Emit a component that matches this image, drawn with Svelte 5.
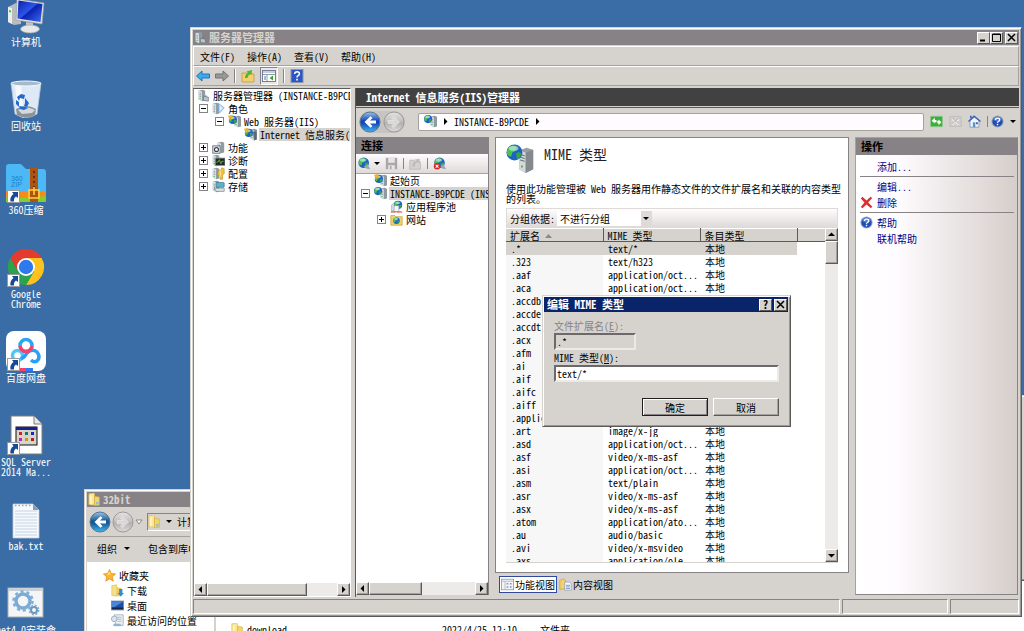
<script>
  const shortcuts = [
    { icon: 'computer', label: '计算机' },
    { icon: 'recycle', label: '回收站' },
    { icon: 'zip', label: '360压缩', link: true },
    { icon: 'chrome', label: 'Google\nChrome', link: true },
    { icon: 'netdisk', label: '百度网盘', link: true },
    { icon: 'sql', label: 'SQL Server\n2014 Ma...', link: true },
    { icon: 'text', label: 'bak.txt' },
    { icon: 'gears', label: 'net4.0安装命' }
  ];

  const menus = [
    ['文件', 'F'],
    ['操作', 'A'],
    ['查看', 'V'],
    ['帮助', 'H']
  ];

  const serverTree = [
    { level: 0, icon: 'server', label: '服务器管理器 (INSTANCE-B9PCDE)' },
    { level: 1, icon: 'roles', label: '角色', toggle: '-' },
    { level: 2, icon: 'web', label: 'Web 服务器(IIS)', toggle: '-' },
    { level: 3, icon: 'iis', label: 'Internet 信息服务(IIS)管理器', selected: true },
    { level: 1, icon: 'features', label: '功能', toggle: '+' },
    { level: 1, icon: 'diagnose', label: '诊断', toggle: '+' },
    { level: 1, icon: 'config', label: '配置', toggle: '+' },
    { level: 1, icon: 'storage', label: '存储', toggle: '+' }
  ];

  const connectionTree = [
    { level: 1, icon: 'web', label: '起始页' },
    { level: 1, icon: 'site', label: 'INSTANCE-B9PCDE (INSTANCE-B9PCDE\\Administrator)', toggle: '-', selected: true },
    { level: 2, icon: 'pool', label: '应用程序池' },
    { level: 2, icon: 'sites', label: '网站', toggle: '+' }
  ];

  const mimeTypes = [
    ['.*', 'text/*'],
    ['.323', 'text/h323'],
    ['.aaf', 'application/oct...'],
    ['.aca', 'application/oct...'],
    ['.accdb', 'application/msa...'],
    ['.accde', 'application/msa...'],
    ['.accdt', 'application/msa...'],
    ['.acx', 'application/int...'],
    ['.afm', 'application/oct...'],
    ['.ai', 'application/pos...'],
    ['.aif', 'audio/x-aiff'],
    ['.aifc', 'audio/aiff'],
    ['.aiff', 'audio/aiff'],
    ['.application', 'application/x-m...'],
    ['.art', 'image/x-jg'],
    ['.asd', 'application/oct...'],
    ['.asf', 'video/x-ms-asf'],
    ['.asi', 'application/oct...'],
    ['.asm', 'text/plain'],
    ['.asr', 'video/x-ms-asf'],
    ['.asx', 'video/x-ms-asf'],
    ['.atom', 'application/ato...'],
    ['.au', 'audio/basic'],
    ['.avi', 'video/x-msvideo'],
    ['.axs', 'application/ole...']
  ];

  let selectedRow = $state(0);
  let view = $state('features');
  let mimeType = $state('text/*');
  let dialogOpen = $state(true);
</script>

{#snippet tower(x)}
  <path d="M{x} 2l5-1 3 1v12l-4 1-4-2z" fill="#8f9ba3" />
  <path d="M{x} 2l4 1v12l-4-2z" fill="#dfe6ea" />
  <path d="M{x + 1} 5l2 .5M{x + 1} 7l2 .5M{x + 1} 9l2 .5" stroke="#6c7880" stroke-width=".8" />
  <rect x={x + 1} y="11" width="1.5" height="1.5" fill="#3fbf4a" />
{/snippet}

{#snippet globe(cx, cy, r)}
  <circle {cx} {cy} {r} fill="#1d63c4" />
  <path d="M{cx - r * 0.8} {cy - r * 0.5}q{r * 0.6} {-r * 0.7} {r * 1.1} {-r * 0.2}q{-r * 0.1} {r * 0.7} {-r * 0.6} {r * 0.7}q0 {r * 0.6} {-r * 0.3} {r * 0.5}q{-r * 0.6} {-r * 0.2} {-r * 0.2} {-r}z" fill="#4fc04a" />
  <path d="M{cx + r * 0.2} {cy + r * 0.1}q{r * 0.5} {-r * 0.3} {r * 0.7} {r * 0.1}q{-r * 0.3} {r * 0.7} {-r * 0.6} {r * 0.6}z" fill="#37a63c" />
  <ellipse cx={cx - r * 0.1} cy={cy - r * 0.5} rx={r * 0.6} ry={r * 0.3} fill="#d4f3ff" opacity=".6" />
{/snippet}

{#snippet helpIcon()}
  <svg class="icon" viewBox="0 0 16 16" aria-hidden="true">
    <circle cx="8" cy="8" r="7.5" fill="#9aa5b8" />
    <circle cx="8" cy="8" r="6.3" fill="#1f4db4" />
    <ellipse cx="8" cy="5" rx="5" ry="3" fill="#6f9cf0" opacity=".6" />
    <path d="M5.500 6.200q0-2.400 2.600-2.400t2.500 2.200q0 1.300-1.400 2t-1.200 1.800" fill="none" stroke="#fff" stroke-width="1.7" />
    <rect x="7.1" y="10.8" width="1.8" height="1.8" fill="#fff" />
  </svg>
{/snippet}

{#snippet folderIcon()}
  <svg class="icon" viewBox="0 0 16 16" aria-hidden="true">
    <path d="M1 1l6-1 1 1v14l-7-1z" fill="#f9e795" stroke="#d9b64a" stroke-width=".7" />
    <path d="M8 4l6 1v10l-6 .5z" fill="#f3d468" stroke="#d2aa3c" stroke-width=".7" />
    <path d="M3.500 3v11" stroke="#fff9da" stroke-width="1.5" />
    <rect x="10" y="11" width="3" height="3" fill="#7fc0e8" />
  </svg>
{/snippet}

{#snippet navCircle(id, forward, active, color)}
  <svg class="nav-circle" viewBox="0 0 22 22" aria-hidden="true">
    <defs>
      <linearGradient {id} x1="0" y1="0" x2="0" y2="1">
        <stop offset="0" stop-color={active ? '#9cc4e8' : '#e6e4e2'} />
        <stop offset=".45" stop-color={active ? color : '#c2c0c0'} />
        <stop offset=".55" stop-color={active ? color : '#b2b0b0'} />
        <stop offset="1" stop-color={active ? '#3fb6f2' : '#dedcda'} />
      </linearGradient>
    </defs>
    <circle cx="11" cy="11" r="10" fill="url(#{id})" stroke={active ? '#5a7390' : '#9c9a9a'} />
    <path
      d={forward ? 'M5 9.5h6L8.5 7l2-1.8L16.5 11l-6 5.800-2-1.800 2.500-2.500H5z' : 'M17 9.5h-6L13.5 7l-2-1.8L5.5 11l6 5.800 2-1.800-2.500-2.500h6z'}
      fill={active ? '#fff' : '#d9d7d7'}
      stroke={active ? 'none' : '#eeecec'}
      stroke-width=".6"
    />
  </svg>
{/snippet}

{#snippet smallIcon(name)}
  <svg class="icon" viewBox="0 0 16 16" aria-hidden="true">
    {#if name === 'server'}
      {@render tower(2)}
      <path d="M8 9l6 1v5l-6-1z" fill="#b9c4cb" stroke="#66747e" stroke-width=".8" />
      <path d="M9.500 9q1.500-2 3 .5" fill="none" stroke="#66747e" />
    {:else if name === 'roles'}
      {@render tower(1)}
      <path d="M8 2l7 5-5 6-2-1z" fill="#b5d7f4" stroke="#6aa2d0" stroke-width=".8" />
      <path d="M10 5l3 2.500-3 3z" fill="#eef7ff" />
    {:else if name === 'web' || name === 'iis'}
      {@render tower(8)}
      {@render globe(6, 6, 5)}
      <path d="M0 1l5-1 1 4-4 2z" fill="#f1b02c" />
      {#if name === 'iis'}
        <path d="M11 5l3-1 1.500 1v9l-3 1.500z" fill="#5f6a72" />
      {/if}
    {:else if name === 'site'}
      {@render tower(8)}
      {@render globe(5, 5, 5)}
    {:else if name === 'features'}
      {@render tower(7)}
      <rect x="1" y="6" width="9" height="9" fill="#e9eef2" stroke="#4f5b64" />
      <circle cx="5.500" cy="10.500" r="2.500" fill="none" stroke="#303a42" stroke-width="1.300" />
    {:else if name === 'diagnose'}
      {@render tower(1)}
      <rect x="4" y="5" width="12" height="9" fill="#1f2a22" stroke="#8a9298" />
      <path d="M5.500 10h2l1.500-3 2 5 1-3h2.500" fill="none" stroke="#65c83a" />
    {:else if name === 'config'}
      {@render tower(1)}
      <path d="M8 4h3l1-3 3 1v6l-2 2v5h-3v-4l-3-1z" fill="#f2c23b" stroke="#b98a1c" stroke-width=".7" />
      <path d="M10 4v8" stroke="#fff3bf" />
    {:else if name === 'storage'}
      {@render tower(1)}
      <rect x="5" y="3" width="10" height="6" rx="1" fill="#5ab2cf" stroke="#3a7186" stroke-width=".8" />
      <path d="M3 10h12v4H5z" fill="#dce2e5" stroke="#717d84" stroke-width=".8" />
    {:else if name === 'pool'}
      <path d="M2 6l5-4v11l-5 1z" fill="#d9e2ea" stroke="#8796a3" stroke-width=".7" />
      {@render globe(10, 6, 5)}
      <rect x="5" y="7" width="6" height="7" fill="#f4f7fa" stroke="#7f8b96" stroke-width=".7" />
      <path d="M1 14h6v1.500H1zM8 14h7v1.500H8z" fill="#d23c30" />
    {:else if name === 'sites'}
      <path d="M1 3h5l1 1.500h8V15H1z" fill="#f2cf67" stroke="#c49a30" stroke-width=".8" />
      {@render globe(8, 9.5, 4)}
    {:else if name === 'star'}
      <path d="M8 .5l2.200 5 5.300.5-4 3.700 1.200 5.300L8 12.200 3.300 15l1.200-5.300-4-3.700 5.300-.5z" fill="#fbb52e" stroke="#df8518" stroke-width=".8" />
      <path d="M8 3l1.300 3.300L5 8z" fill="#ffe58f" />
    {:else if name === 'download'}
      <path d="M1 2l6-1v14l-6-1z" fill="#f7e08a" stroke="#d9b64a" stroke-width=".7" />
      <path d="M7 4l6 1v10H7z" fill="#f0cc5a" />
      <path d="M10 6h4v5h2l-4 4.500L8 11h2z" fill="#2b8de0" />
    {:else if name === 'desktop'}
      <rect x=".5" y="2.500" width="15" height="11" fill="#1d4fa5" stroke="#7b8ca5" />
      <path d="M1 3h14L4 10H1z" fill="#4b86d6" />
      <path d="M1 11.500h14" stroke="#15244a" stroke-width="2" />
    {:else if name === 'recent'}
      <path d="M4 1h11v13H6z" fill="#eef2f6" stroke="#8b98a5" stroke-width=".8" />
      <path d="M7 4h6M7 6.500h6M8 9h5" stroke="#9fb0c0" />
      <circle cx="4" cy="6" r="3.500" fill="#d7e6f2" stroke="#8296a8" stroke-width=".8" />
      <path d="M3 12h9v3H3z" fill="#8fb4d6" />
    {/if}
  </svg>
{/snippet}

{#snippet bigIcon(name)}
  <svg class="big-icon" viewBox="0 0 40 40" aria-hidden="true">
    {#if name === 'computer'}
      <defs>
        <linearGradient id="screen" x1="0" y1="0" x2="1" y2="1">
          <stop offset="0" stop-color="#0a1fae" />
          <stop offset=".45" stop-color="#2d55e6" />
          <stop offset=".5" stop-color="#0b21b4" />
          <stop offset="1" stop-color="#3f6df0" />
        </linearGradient>
      </defs>
      <path d="M2 12l8-4 5 1v20l-7 1-6-3z" fill="#b9bcbe" />
      <path d="M2 12l4 1v16l-4-2z" fill="#eceeee" />
      <path d="M3 15l2 .5v2L3 17z" fill="#2fd13a" />
      <path d="M11 4l27 4-2 21-26-4z" fill="#e3e4e6" stroke="#9b9fa3" stroke-width=".7" />
      <path d="M12.500 5.500l24 3.500-2 18-23-3.500z" fill="url(#screen)" />
      <path d="M20 27l7 1v5h-7z" fill="#c4c6c8" />
      <ellipse cx="24" cy="34" rx="9.500" ry="4" fill="#e6e7e8" stroke="#a4a7a9" stroke-width=".7" />
    {:else if name === 'recycle'}
      <path d="M5 4l4 31q11 7 22 0l4-31z" fill="#dde9f6" stroke="#b3c4d6" stroke-width=".8" />
      <path d="M9 6l3 30q4 3 6 3L15 6z" fill="#fff" opacity=".7" />
      <path d="M10 30q10-6 20 0l-1 6q-9 5-18 0z" fill="#8c9298" />
      <path d="M12 31q8-5 17 0l-3 3-10 1z" fill="#d4d8da" />
      <ellipse cx="20" cy="4.500" rx="15" ry="2.500" fill="#a8b9c9" stroke="#f3f8fc" />
      <path d="M11 18l4-3 4 1-1 4-4-1-1 3zM10 21l3 2v5l-3-3zM19 19l4 5-2 4-3-1 1-3zM13 27l6 1 3 1-4 2-4-1z" fill="#2468d0" />
    {:else if name === 'zip'}
      <path d="M0 4q0-3 3-3h12l5 5h17q3 0 3 3v30H0z" fill="#4cb8f6" />
      <path d="M0 29h40v10H0z" fill="#f68a1c" />
      <path d="M0 34q20 2 40-1v4q0 2-2 2H0z" fill="#83cf2c" />
      <text x="5" y="18" class="zip-text">360</text>
      <text x="5" y="24" class="zip-text">ZIP</text>
      <path d="M24 5h8v34h-8z" fill="#ad5411" />
      <path d="M28 8v2M28 13v2M28 18v2M28 23v3" stroke="#53240a" stroke-width="1.600" />
      <path d="M23 27h10v8H23zM28 24v8" fill="none" stroke="#ffcf3e" stroke-width="1.600" />
    {:else if name === 'chrome'}
      <path d="M20 11h15.600A18 18 0 0 1 20 38l8-13.500z" fill="#fcc31e" />
      <path d="M4.400 11A18 18 0 0 1 35.600 11H20l-7 5-1 8z" fill="#e33b2e" />
      <path d="M12 24.500L20 29l7.800-4.500L20 38A18 18 0 0 1 4.400 11z" fill="#2da24c" />
      <circle cx="20" cy="20" r="9" fill="#fff" />
      <circle cx="20" cy="20" r="7.200" fill="#2f79ee" />
    {:else if name === 'netdisk'}
      <rect width="40" height="40" rx="8" fill="#fff" />
      <circle cx="11.500" cy="24.500" r="5" fill="none" stroke="#4cc6fb" stroke-width="3.500" />
      <path d="M15 28q4-2 6-6 5-5 10-1 4 5 0 9-3 2-6-1" fill="none" stroke="#2b9ff8" stroke-width="3.500" />
      <circle cx="20" cy="14.500" r="6" fill="none" stroke="#2ba6f5" stroke-width="3.500" />
      <path d="M14 15q1 5.500 6 5.500t6-5.500" fill="none" stroke="#f7416a" stroke-width="3.500" />
      <path d="M13 38.500h7" stroke="#f7416a" stroke-width="3" />
      <path d="M20 38.500h7" stroke="#2f7df5" stroke-width="3" />
    {:else if name === 'sql'}
      <path d="M5 1h23l8 8v30H5z" fill="#fff" stroke="#7d7d7d" />
      <path d="M28 1v8h8" fill="#e8e8e8" stroke="#7d7d7d" />
      <rect x="10" y="12" width="21" height="18" fill="#d8d4cc" stroke="#111" />
      <path d="M10 13.500h21" stroke="#14248c" stroke-width="3" />
      <path d="M13 17h3v3h-3z" fill="#c22" />
      <path d="M19 17h3v3h-3z" fill="#177" />
      <path d="M25 17h3v3h-3z" fill="#22c" />
      <path d="M13 23h3v3h-3z" fill="#b2b" />
      <path d="M19 23h3v3h-3z" fill="#c91" />
      <path d="M25 23h3v3h-3z" fill="#a22" />
    {:else if name === 'text'}
      <path d="M7 5h20l6 6v28H7z" fill="#f7fafd" stroke="#c3ccd6" stroke-width=".8" />
      <path d="M27 5v6h6" fill="#8d9aa8" />
      <path d="M9 12h22M9 15h22M9 18h22M9 21h22M9 24h22M9 27h22M9 30h22M9 33h22M9 36h22" stroke="#c4d4e4" />
      <path d="M9 6.500h16" stroke="#9aa6b2" stroke-width="1.500" stroke-dasharray="1.500 2" />
    {:else if name === 'gears'}
      <rect x="2" y="5" width="35" height="29" fill="#f4f5f6" stroke="#a7adb3" />
      <path d="M2.500 7h34" stroke="#c6cfda" stroke-width="2" />
      <circle cx="17" cy="18" r="7" fill="none" stroke="#7cabd4" stroke-width="3.500" />
      <circle cx="17" cy="18" r="9.500" fill="none" stroke="#7eaed6" stroke-width="2.500" stroke-dasharray="3 3" />
      <circle cx="28" cy="27" r="3" fill="none" stroke="#6d97bc" stroke-width="2" />
      <circle cx="28" cy="27" r="4.700" fill="none" stroke="#7eaed6" stroke-width="1.500" stroke-dasharray="2 1.700" />
    {/if}
  </svg>
{/snippet}

{#snippet tree(nodes, label)}
  <ul class="tree" aria-label={label}>
    {#each nodes as node}
      <li class="node level{node.level}">
        <span class="slot">
          {#if node.toggle}
            <button class="toggle" aria-label={node.toggle === '-' ? '折叠' : '展开'}>
              <svg viewBox="0 0 7 7"><path d={node.toggle === '-' ? 'M1 3.5h5' : 'M1 3.5h5M3.5 1v5'} stroke="#000" /></svg>
            </button>
          {/if}
        </span>
        {@render smallIcon(node.icon)}
        <span class="node-label" class:selected={node.selected}>{node.label}</span>
      </li>
    {/each}
  </ul>
{/snippet}

{#snippet hscroll(size)}
  <div class="scrollbar">
    <button class="scroll-button" aria-label="向左滚动"><svg viewBox="0 0 7 7"><path d="M5 0v7L1.500 3.500z" /></svg></button>
    <div class="thumb" style="width: {size}%"></div>
    <span class="track"></span>
    <button class="scroll-button" aria-label="向右滚动"><svg viewBox="0 0 7 7"><path d="M2 0v7l3.500-3.500z" /></svg></button>
  </div>
{/snippet}

<main class="desktop">
  <ul class="shortcuts">
    {#each shortcuts as item}
      <li>
        <span class="picture">
          {@render bigIcon(item.icon)}
          {#if item.link}
            <svg class="link-badge" viewBox="0 0 13 13" aria-hidden="true">
              <rect x=".5" y=".5" width="12" height="12" fill="#fff" stroke="#9a9a9a" />
              <path d="M5 2h6v6L9 6.500Q6.500 8 7 11.500H3.500Q2.500 7 6.500 4z" fill="#164a96" />
            </svg>
          {/if}
        </span>
        <span class="caption">{item.label}</span>
      </li>
    {/each}
  </ul>

  <section class="window explorer" aria-label="32bit">
    <header class="titlebar">{@render folderIcon()}<span>32bit</span></header>
    <div class="explorer-nav">
      <button class="plain" aria-label="后退">{@render navCircle('ex-back', false, true, '#135a94')}</button>
      <button class="plain" aria-label="前进">{@render navCircle('ex-forward', true, false)}</button>
      <svg class="nav-caret" viewBox="0 0 8 6" aria-hidden="true"><path d="M1 1h6L4 5z" fill="#fff" stroke="#888" /></svg>
      <div class="explorer-address">{@render folderIcon()}<i class="caret"></i><span>计算机</span></div>
    </div>
    <div class="explorer-tools">
      <button class="plain">组织 <i class="caret"></i></button>
      <button class="plain">包含到库中 <i class="caret"></i></button>
    </div>
    <div class="explorer-body">
      <ul class="places">
        <li class="favorites">{@render smallIcon('star')}<span>收藏夹</span></li>
        <li>{@render smallIcon('download')}<span>下载</span></li>
        <li>{@render smallIcon('desktop')}<span>桌面</span></li>
        <li>{@render smallIcon('recent')}<span>最近访问的位置</span></li>
      </ul>
      <ul class="files">
        <li>{@render folderIcon()}<span class="file-name">download</span><span class="file-date">2022/4/25 12:10</span><span>文件夹</span></li>
      </ul>
    </div>
  </section>

  <section class="window back-window" aria-hidden="true"></section>

  <section class="window manager" aria-label="服务器管理器">
    <header class="titlebar">
      {@render smallIcon('server')}
      <h1>服务器管理器</h1>
      <div class="window-buttons">
        <button aria-label="最小化"><svg viewBox="0 0 9 9"><path d="M1 7.500h5" stroke="#000" stroke-width="2" /></svg></button>
        <button aria-label="最大化"><svg viewBox="0 0 9 9"><path d="M.5 1h8v7.500h-8zM.5 1.500h8" fill="none" stroke="#000" /></svg></button>
        <button class="close" aria-label="关闭"><svg viewBox="0 0 9 9"><path d="M1 1l7 7M8 1L1 8" stroke="#000" stroke-width="1.500" /></svg></button>
      </div>
    </header>

    <nav class="menubar">
      {#each menus as [name, key]}
        <button class="plain">{name}({key})</button>
      {/each}
    </nav>

    <div class="toolbar">
      <button class="plain" aria-label="后退">
        <svg class="tool-icon" viewBox="0 0 14 14"><path d="M.5 7L6 2v3h7.500v4H6v3z" fill="#39aaf0" stroke="#2077bb" /></svg>
      </button>
      <button class="plain" aria-label="前进">
        <svg class="tool-icon" viewBox="0 0 14 14"><path d="M13.500 7L8 2v3H.5v4H8v3z" fill="#989898" stroke="#727272" /></svg>
      </button>
      <i class="separator"></i>
      <button class="plain" aria-label="上一级">
        <svg class="tool-icon" viewBox="0 0 14 14">
          <path d="M1 4h5l1 1h6v8H1z" fill="#f3cf70" stroke="#c49b3f" stroke-width=".8" />
          <path d="M4 9q0-4 3-5L5.500 2.500 11 1l-.5 5L9 5Q7 6 6.500 9z" fill="#4eb82b" />
        </svg>
      </button>
      <button class="plain pressed" aria-label="显示/隐藏控制台树">
        <svg class="tool-icon" viewBox="0 0 14 14">
          <rect x=".5" y="1.500" width="13" height="11" fill="#fff" stroke="#737f96" />
          <path d="M1 3h12M1 5.500h12M5 6v6" stroke="#8f9bb3" />
          <path d="M2 8h2M2 10h2" stroke="#4d73b5" />
          <path d="M11 6.500v5L7.500 9z" fill="#38a32b" />
        </svg>
      </button>
      <i class="separator"></i>
      <button class="plain" aria-label="帮助">
        <svg class="tool-icon" viewBox="0 0 14 14">
          <rect x="1" y=".5" width="12" height="13" fill="#2c56c4" stroke="#8b96ac" />
          <path d="M4.700 5q0-2.200 2.400-2.200T9.400 5q0 1-1.200 1.700T7 8.500" fill="none" stroke="#fff" stroke-width="1.500" />
          <rect x="6.200" y="9.800" width="1.700" height="1.700" fill="#fff" />
        </svg>
      </button>
    </div>

    <div class="panes">
      <aside class="server-pane">
        {@render tree(serverTree, '服务器管理器')}
        {@render hscroll(64)}
      </aside>

      <section class="iis">
        <h2 class="iis-title">Internet 信息服务(IIS)管理器</h2>
        <div class="iis-nav">
          <div class="round-buttons">
            <button class="plain" aria-label="后退">{@render navCircle('iis-back', false, true, '#1546b8')}</button>
            <button class="plain" aria-label="前进">{@render navCircle('iis-forward', true, false)}</button>
          </div>
          <div class="address">
            {@render smallIcon('site')}
            <svg class="crumb" viewBox="0 0 5 7"><path d="M1 0v7l3.500-3.500z" /></svg>
            <span>INSTANCE-B9PCDE</span>
            <svg class="crumb" viewBox="0 0 5 7"><path d="M1 0v7l3.500-3.500z" /></svg>
          </div>
          <button class="plain" aria-label="刷新">
            <svg class="icon" viewBox="0 0 16 16">
              <rect x=".5" y="1.500" width="15" height="13" rx="1" fill="#36b335" stroke="#9cc79a" />
              <path d="M2 7l4-3.500V6h2v3H6v1.500zM14 9l-3.500 3.500V10H9V7h1.500V5.500z" fill="#fff" />
            </svg>
          </button>
          <button class="plain" aria-label="停止">
            <svg class="icon" viewBox="0 0 16 16">
              <rect x="1" y="2" width="14" height="12" fill="#d0cecc" stroke="#bebcba" />
              <path d="M4 5l8 7M12 5l-8 7" stroke="#f2f0ef" stroke-width="2" />
              <path d="M4 4l8 7M12 4l-8 7" stroke="#aaa8a8" />
            </svg>
          </button>
          <button class="plain" aria-label="主页">
            <svg class="icon" viewBox="0 0 16 16">
              <path d="M2.500 7L8 2.500 13.500 7v8h-11z" fill="#eef3fa" stroke="#7c93b5" />
              <path d="M.5 8L7.500 1.500 15.500 8" fill="none" stroke="#3b5fbd" stroke-width="1.800" />
              <path d="M2.500 1h2v3h-2z" fill="#3b5fbd" />
              <path d="M6 9h3v6H6z" fill="#5a93c9" />
              <path d="M10 9h2v2.500h-2z" fill="#30507f" />
            </svg>
          </button>
          <i class="bar"></i>
          <button class="plain help-menu" aria-label="帮助">{@render helpIcon()}<i class="caret"></i></button>
        </div>

        <div class="columns">
          <aside class="connections">
            <h3>连接</h3>
            <div class="connection-tools">
              <button class="plain" aria-label="连接">
                <svg class="icon" viewBox="0 0 16 16">{@render globe(7, 7, 6.5)}<path d="M7 12l5-3 3 6-5-1z" fill="#9ba7af" /></svg>
                <i class="caret"></i>
              </button>
              <button class="plain" aria-label="保存">
                <svg class="icon" viewBox="0 0 16 16">
                  <path d="M1 1h14v14H1z" fill="#aaa7a9" />
                  <path d="M4 1h8v6H4zM4 10h8v5H4z" fill="#e9e5e7" />
                  <path d="M6 11h2v4H6z" fill="#aaa7a9" />
                </svg>
              </button>
              <i class="bar"></i>
              <button class="plain" aria-label="向上">
                <svg class="icon" viewBox="0 0 16 16">
                  <path d="M1 4h6l1 2h6v9H1z" fill="#d5d1d3" stroke="#b9b5b7" />
                  <path d="M4 12q0-6 5-7L7 3l6-1v6l-2-2q-4 1-4 6z" fill="#c0bcbe" />
                </svg>
              </button>
              <i class="bar"></i>
              <button class="plain" aria-label="断开连接">
                <svg class="icon" viewBox="0 0 16 16">
                  {@render globe(8, 7, 6.5)}
                  <path d="M9 11l4-2 3 6-5-1z" fill="#9ba7af" />
                  <circle cx="5" cy="11.500" r="4" fill="#d8232a" />
                  <path d="M3.300 9.800l3.400 3.400M6.700 9.800l-3.400 3.400" stroke="#fff" stroke-width="1.300" />
                </svg>
              </button>
            </div>
            {@render tree(connectionTree, '连接')}
            {@render hscroll(40)}
          </aside>

          <div class="center">
            <article class="feature">
              <div class="feature-head">
                <svg class="feature-icon" viewBox="0 0 32 32" aria-hidden="true">
                  <path d="M14 7l8-3 7 2v21l-8 4-7-4z" fill="#9a9fa3" />
                  <path d="M14 7l7 2v22l-7-4z" fill="#d5d9dc" />
                  <path d="M21 9l8-3v21l-8 4z" fill="#84898d" />
                  <path d="M15 11l5 1.500M15 14l5 1.500M15 17l5 1.500" stroke="#5c6268" />
                  <path d="M16 23h2v2h-2z" fill="#45b94a" />
                  {@render globe(9, 9, 8.5)}
                </svg>
                <h2>MIME 类型</h2>
              </div>
              <p>使用此功能管理被 Web 服务器用作静态文件的文件扩展名和关联的内容类型的列表。</p>
              <div class="group-bar">
                <label for="group">分组依据:</label>
                <span class="select-box">
                  <select id="group">
                    <option>不进行分组</option>
                    <option>条目类型</option>
                  </select>
                  <i class="caret"></i>
                </span>
              </div>
              <div class="list">
                <table>
                  <thead>
                    <tr>
                      <th class="col">扩展名 <svg class="sort" viewBox="0 0 7 4"><path d="M0 4h7L3.500 0z" fill="#8a8a8a" /></svg></th>
                      <th class="col">MIME 类型</th>
                      <th class="col">条目类型</th>
                      <th aria-label="其他"></th>
                    </tr>
                  </thead>
                  <tbody>
                    {#each mimeTypes as [extension, type], i}
                      <tr class:selected={selectedRow === i} onclick={() => (selectedRow = i)}>
                        <td>{extension}</td>
                        <td>{type}</td>
                        <td>本地</td>
                        <td></td>
                      </tr>
                    {/each}
                  </tbody>
                </table>
                <div class="scrollbar vertical">
                  <button class="scroll-button" aria-label="向上滚动"><svg viewBox="0 0 7 7"><path d="M0 5h7L3.500 1.500z" /></svg></button>
                  <div class="thumb" style="height: 7%"></div>
                  <span class="track"></span>
                  <button class="scroll-button" aria-label="向下滚动"><svg viewBox="0 0 7 7"><path d="M0 2h7L3.500 5.500z" /></svg></button>
                </div>
              </div>
            </article>
            <div class="view-tabs">
              <button class="tab" class:active={view === 'features'} onclick={() => (view = 'features')}>
                <svg class="icon" viewBox="0 0 16 16">
                  <rect x=".5" y="1.500" width="15" height="13" fill="#f2f4f8" stroke="#8d97ab" />
                  <path d="M1 4h14M5 4v10" stroke="#aab3c4" />
                  <path d="M7 6h2v2H7zM11 6h2v2h-2zM7 10h2v2H7zM11 10h2v2h-2z" fill="#8393b5" />
                </svg>功能视图
              </button>
              <button class="tab" class:active={view === 'content'} onclick={() => (view = 'content')}>
                <svg class="icon" viewBox="0 0 16 16">
                  <path d="M1 3l5-2 2 2v10l-7 1z" fill="#f4d070" stroke="#c69c38" stroke-width=".8" />
                  <path d="M7 5h6l2 2v8H7z" fill="#f5f8fc" stroke="#8793a6" stroke-width=".8" />
                  <path d="M8.500 9h5M8.500 11h5M8.500 13h5" stroke="#5f8fd0" />
                </svg>内容视图
              </button>
            </div>
          </div>

          <aside class="actions">
            <h3>操作</h3>
            <ul>
              <li><a href="#add">添加...</a></li>
              <li class="ruled"><a href="#edit">编辑...</a></li>
              <li>
                <svg class="icon" viewBox="0 0 16 16" aria-hidden="true"><path d="M1 3l2-2 5 4.500L13 1l2 1.500L10 8l5 5-1.500 2L8 10.500 3 15l-2-1.500L5.500 8z" fill="#de2c30" /></svg>
                <a href="#delete">删除</a>
              </li>
              <li class="ruled">{@render helpIcon()}<a href="#help">帮助</a></li>
              <li><a href="#online">联机帮助</a></li>
            </ul>
          </aside>
        </div>
      </section>
    </div>

    <footer class="statusbar"><span class="wide"></span><span class="medium"></span><span class="small"></span></footer>
  </section>

  {#if dialogOpen}
    <form class="window dialog" aria-label="编辑 MIME 类型" onsubmit={(e) => e.preventDefault()}>
      <header class="titlebar active">
        <h2>编辑 MIME 类型</h2>
        <div class="window-buttons">
          <button type="button" aria-label="帮助"><b>?</b></button>
          <button type="button" class="close" aria-label="关闭" onclick={() => (dialogOpen = false)}>
            <svg viewBox="0 0 9 9"><path d="M1 1l7 7M8 1L1 8" stroke="#000" stroke-width="1.500" /></svg>
          </button>
        </div>
      </header>
      <div class="fields">
        <label class="disabled" for="extension">文件扩展名(<u>E</u>):</label>
        <input id="extension" class="short" value=".*" disabled />
        <label for="mime">MIME 类型(<u>M</u>):</label>
        <input id="mime" bind:value={mimeType} />
      </div>
      <div class="dialog-buttons">
        <button class="default">确定</button>
        <button type="button" onclick={() => (dialogOpen = false)}>取消</button>
      </div>
    </form>
  {/if}
</main>

<style>
  :global(body) {
    margin: 0;
    background: #3a6da5;
  }

  .desktop {
    position: relative;
    height: 100vh;
    min-height: 480px;
    overflow: hidden;
    background: #3a6da5;
    color: #000;
    font: 10px/13px 'Noto Sans Mono CJK SC', 'Noto Sans CJK SC', monospace;
    cursor: default;
  }

  .desktop * {
    box-sizing: border-box;
  }

  ul {
    list-style: none;
    margin: 0;
    padding: 0;
  }

  h1,
  h2,
  h3,
  p {
    margin: 0;
    font-size: 11px;
  }

  button,
  input,
  select {
    font: inherit;
    color: inherit;
    margin: 0;
    padding: 0;
  }

  svg {
    display: block;
    flex: none;
  }

  .plain {
    display: flex;
    align-items: center;
    gap: 3px;
    border: 0;
    background: none;
    white-space: nowrap;
  }

  .icon {
    width: 13px;
    height: 13px;
  }

  .caret {
    flex: none;
    width: 0;
    height: 0;
    border: 3px solid transparent;
    border-top-color: #000;
    border-bottom: 0;
  }

  /* desktop shortcuts */
  .shortcuts {
    width: 52px;
    margin-top: -5px;
  }

  .shortcuts li {
    display: flex;
    flex-direction: column;
    align-items: center;
    gap: 2px;
    height: 84px;
  }

  .picture {
    position: relative;
  }

  .big-icon {
    width: 40px;
    height: 40px;
  }

  .zip-text {
    font: 7px 'Liberation Sans', sans-serif;
    fill: #1d7fc4;
  }

  .link-badge {
    position: absolute;
    left: 1px;
    bottom: 0;
    width: 13px;
    height: 13px;
  }

  .caption {
    color: #fff;
    line-height: 10px;
    text-align: center;
    white-space: pre;
  }

  /* windows */
  .window {
    position: absolute;
    display: flex;
    flex-direction: column;
    padding: 2px;
    background: #d6d3ce;
    border: 1px solid;
    border-color: #d6d3ce #5a5a5a #5a5a5a #d6d3ce;
    box-shadow: inset 1px 1px #fff, inset -1px -1px #9a9896;
  }

  .titlebar {
    display: flex;
    align-items: center;
    gap: 2px;
    height: 15px;
    flex: none;
    padding: 0 1px;
    background: #868286;
    color: #d6d3ce;
    font-size: 11px;
    font-weight: bold;
  }

  .titlebar.active {
    background: #0a246a;
    color: #fff;
  }

  .window-buttons {
    display: flex;
    margin-left: auto;
  }

  .window-buttons button {
    display: flex;
    align-items: center;
    justify-content: center;
    width: 13px;
    height: 12px;
    background: #d6d3ce;
    color: #000;
    border: 1px solid;
    border-color: #fff #5a5a5a #5a5a5a #fff;
  }

  .window-buttons .close {
    margin-left: 2px;
  }

  .window-buttons svg {
    width: 9px;
    height: 9px;
  }

  .back-window {
    top: 395px;
    right: -20px;
    width: 60px;
    height: 186px;
  }

  /* explorer */
  .explorer {
    top: 489px;
    left: 84px;
    right: -40px;
    bottom: -60px;
  }

  .explorer-nav {
    display: flex;
    align-items: center;
    gap: 1px;
    height: 30px;
    padding-left: 2px;
    border-bottom: 1px solid #a5a29e;
    flex: none;
  }

  .nav-circle {
    width: 22px;
    height: 22px;
  }

  .nav-caret {
    width: 8px;
    height: 6px;
  }

  .explorer-address {
    display: flex;
    align-items: center;
    gap: 5px;
    flex: 1;
    height: 18px;
    margin-left: 3px;
    border: 1px solid;
    border-color: #868286 #fff #fff #868286;
  }

  .explorer-tools {
    display: flex;
    align-items: center;
    gap: 18px;
    height: 25px;
    padding: 0 0 2px 10px;
    flex: none;
  }

  .explorer-tools .plain {
    gap: 7px;
  }

  .explorer-body {
    display: flex;
    flex: 1;
    background: #fff;
  }

  .places {
    width: 129px;
    padding-top: 6px;
    border-right: 2px solid #d6d3ce;
  }

  .places li {
    display: flex;
    align-items: center;
    gap: 3px;
    height: 15px;
    padding-left: 24px;
    white-space: nowrap;
  }

  .places .favorites {
    padding-left: 16px;
  }

  .files {
    padding: 60px 0 0 15px;
  }

  .files li {
    display: flex;
    align-items: center;
    gap: 3px;
    height: 15px;
  }

  .file-name {
    width: 192px;
  }

  .file-date {
    width: 95px;
  }

  /* server manager */
  .manager {
    top: 27px;
    left: 190px;
    right: 2px;
    bottom: 14px;
  }

  .menubar,
  .toolbar {
    display: flex;
    align-items: center;
    flex: none;
    height: 20px;
    border: 1px solid;
    border-color: #fff #a5a29e #a5a29e #fff;
  }

  .menubar {
    gap: 12px;
    margin-top: 1px;
    padding-left: 6px;
  }

  .toolbar {
    gap: 5px;
    padding-left: 2px;
  }

  .tool-icon {
    width: 14px;
    height: 14px;
  }

  .pressed {
    padding: 1px;
    background: #eae8e5;
    border: 1px solid;
    border-color: #868286 #fff #fff #868286;
  }

  .separator {
    width: 2px;
    height: 14px;
    border-left: 1px solid #868286;
    border-right: 1px solid #fff;
  }

  .panes {
    display: flex;
    gap: 4px;
    flex: 1;
    min-height: 0;
    margin-top: 2px;
  }

  .server-pane {
    display: flex;
    flex-direction: column;
    flex: none;
    width: 158px;
    background: #fff;
    border: 1px solid;
    border-color: #5a5a5a #fff #fff #868286;
  }

  .tree {
    flex: 1;
    overflow: hidden;
  }

  .node {
    display: flex;
    align-items: center;
    height: 13px;
    white-space: nowrap;
  }

  .level0 {
    padding-left: 3px;
  }

  .level0 .slot {
    display: none;
  }

  .level1 {
    padding-left: 5px;
  }

  .level2 {
    padding-left: 21px;
  }

  .level3 {
    padding-left: 37px;
  }

  .slot {
    flex: none;
    width: 13px;
  }

  .toggle {
    display: block;
    width: 9px;
    height: 9px;
    background: #fff;
    border: 1px solid #868286;
  }

  .toggle svg {
    width: 7px;
    height: 7px;
  }

  .node-label {
    padding: 0 1px;
    margin-left: 2px;
  }

  .node-label.selected {
    background: #d6d3ce;
  }

  .scrollbar {
    display: flex;
    flex: none;
    height: 13px;
    background: #edebe9;
  }

  .scroll-button,
  .thumb {
    background: #d6d3ce;
    border: 1px solid;
    border-color: #fff #5a5a5a #5a5a5a #fff;
    box-shadow: inset -1px -1px #a5a29e;
  }

  .scroll-button {
    display: flex;
    align-items: center;
    justify-content: center;
    flex: none;
    width: 13px;
    height: 13px;
  }

  .scroll-button svg {
    width: 7px;
    height: 7px;
  }

  .track {
    flex: 1;
  }

  .vertical {
    flex-direction: column;
    width: 13px;
    height: auto;
  }

  .iis {
    display: flex;
    flex-direction: column;
    flex: 1;
    min-width: 0;
    border-left: 1px solid #5a5a5a;
  }

  .iis-title {
    flex: none;
    padding: 3px 10px 2px;
    background: #424142;
    color: #fff;
  }

  .iis-nav {
    display: flex;
    align-items: center;
    gap: 6px;
    flex: none;
    height: 30px;
    margin-top: 1px;
    padding: 0 3px 2px;
    border-top: 1px solid #5a5a5a;
  }

  .round-buttons {
    display: flex;
    gap: 2px;
    background: #c6c3c0;
    border-radius: 11px;
  }

  .address {
    display: flex;
    align-items: center;
    gap: 6px;
    flex: 1;
    height: 18px;
    margin-left: 7px;
    padding-left: 5px;
    background: #fffcff;
    border: 1px solid #a5a29e;
    border-radius: 2px;
  }

  .crumb {
    width: 5px;
    height: 7px;
  }

  .bar {
    width: 1px;
    height: 11px;
    background: #868286;
  }

  .help-menu {
    gap: 6px;
    margin-left: -3px;
  }

  .columns {
    display: flex;
    gap: 6px;
    flex: 1;
    min-height: 0;
    padding: 0 1px 2px 0;
  }

  h3 {
    height: 17px;
    padding: 2px 5px;
    background: #868286;
    flex: none;
  }

  .connections {
    display: flex;
    flex-direction: column;
    flex: none;
    width: 133px;
    background: #fff;
    border-right: 1px solid #868286;
  }

  .connection-tools {
    display: flex;
    align-items: center;
    gap: 5px;
    flex: none;
    height: 20px;
    padding-left: 2px;
    background: linear-gradient(#fffcff, #dedad8);
    border-bottom: 1px solid #a5a29e;
  }

  .center {
    display: flex;
    flex-direction: column;
    flex: 1;
    min-width: 0;
  }

  .feature {
    display: flex;
    flex-direction: column;
    flex: 1;
    min-height: 0;
    padding: 6px 10px 9px;
    background: #fff;
    border: 1px solid #868286;
  }

  .feature-head {
    display: flex;
    gap: 8px;
    height: 40px;
    flex: none;
  }

  .feature-icon {
    width: 30px;
    height: 30px;
  }

  .feature-head h2 {
    font-size: 14px;
    font-weight: normal;
    line-height: 20px;
    color: #212021;
  }

  .feature p {
    margin-right: -8px;
    font-size: 10px;
    line-height: 10px;
  }

  .group-bar {
    display: flex;
    align-items: center;
    gap: 2px;
    flex: none;
    height: 20px;
    margin-top: 4px;
    padding-left: 3px;
    background: linear-gradient(#fffcff, #dedad8);
    border: 1px solid #dedad8;
  }

  .select-box {
    display: flex;
    align-items: center;
    width: 95px;
    height: 15px;
    padding-right: 3px;
    background: linear-gradient(90deg, #fff 84px, #dedad8 84px);
  }

  .select-box select {
    flex: 1;
    min-width: 0;
    height: 15px;
    padding-left: 3px;
    appearance: none;
    border: 0;
    background: none;
  }

  .list {
    display: flex;
    flex: 1;
    min-height: 0;
    overflow: hidden;
    border-bottom: 1px solid #d6d3ce;
  }

  table {
    flex: 1;
    height: 100%;
    table-layout: fixed;
    border-collapse: collapse;
    border-spacing: 0;
  }

  tr {
    height: 13px;
  }

  th,
  td {
    padding: 0 0 0 4px;
    line-height: 12px;
    text-align: left;
    font-weight: normal;
    white-space: nowrap;
    overflow: hidden;
  }

  th {
    background: #d6d3ce;
    border-bottom: 1px solid #5a5a5a;
    border-top: 1px solid #fff;
    line-height: 11px;
  }

  .col {
    width: 97px;
    border-right: 1px solid #5a5a5a;
  }

  .sort {
    display: inline-block;
    width: 7px;
    height: 4px;
    margin-bottom: 2px;
  }

  td {
    padding-left: 5px;
    line-height: 13px;
  }

  td:first-child {
    background: #f7f7f7;
  }

  tr.selected td:not(:last-child) {
    background: #d6d3ce;
  }

  .view-tabs {
    display: flex;
    flex: none;
    padding: 3px 4px 2px;
  }

  .tab {
    display: flex;
    align-items: center;
    gap: 1px;
    height: 17px;
    padding: 0 1px;
    background: none;
    border: 1px solid transparent;
  }

  .tab.active {
    background: #fff;
    border-color: #31499c;
  }

  .actions {
    flex: none;
    width: 163px;
    background: linear-gradient(90deg, #fff, #fffcff 25%, #d6ceca);
    border: 1px solid;
    border-color: #a5a29e #868286 #868286 #a5a29e;
  }

  .actions ul {
    padding: 3px 3px 0 4px;
  }

  .actions li {
    display: flex;
    align-items: center;
    gap: 4px;
    height: 16px;
  }

  .actions li.ruled {
    height: 18px;
    margin-top: 2px;
    padding-top: 1px;
    border-top: 1px solid #868286;
  }

  .actions a {
    color: #000084;
    text-decoration: none;
  }

  .actions a:first-child {
    margin-left: 17px;
  }

  .statusbar {
    display: flex;
    gap: 2px;
    flex: none;
    height: 15px;
    margin-top: 2px;
  }

  .statusbar span {
    border: 1px solid;
    border-color: #868286 #fff #fff #868286;
  }

  .wide {
    flex: 1;
  }

  .medium {
    width: 106px;
  }

  .small {
    width: 69px;
  }

  /* dialog */
  .dialog {
    top: 295px;
    left: 542px;
    width: 249px;
    padding: 1px 2px 10px 1px;
  }

  .dialog .titlebar {
    padding-left: 3px;
  }

  .fields {
    display: flex;
    flex-direction: column;
    align-items: flex-start;
    padding: 6px 9px 0 10px;
  }

  .fields label {
    height: 15px;
    line-height: 15px;
  }

  .fields .disabled {
    color: #868286;
  }

  .fields input {
    width: 100%;
    height: 17px;
    padding: 0 1px;
    background: #fff;
    border: 2px solid;
    border-color: #6b696b #eceae7 #eceae7 #6b696b;
    border-radius: 0;
  }

  .fields .short {
    width: 82px;
    background: #d6d3ce;
    color: #000;
  }

  .dialog-buttons {
    display: flex;
    justify-content: flex-end;
    gap: 5px;
    padding: 16px 9px 0;
  }

  .dialog-buttons button {
    width: 66px;
    height: 18px;
    background: #d6d3ce;
    border: 1px solid;
    border-color: #fff #5a5a5a #5a5a5a #fff;
    box-shadow: inset -1px -1px #a5a29e;
  }

  .dialog-buttons .default {
    border-color: #212021;
    box-shadow: inset 1px 1px #fff, inset -1px -1px #868286;
  }
</style>
